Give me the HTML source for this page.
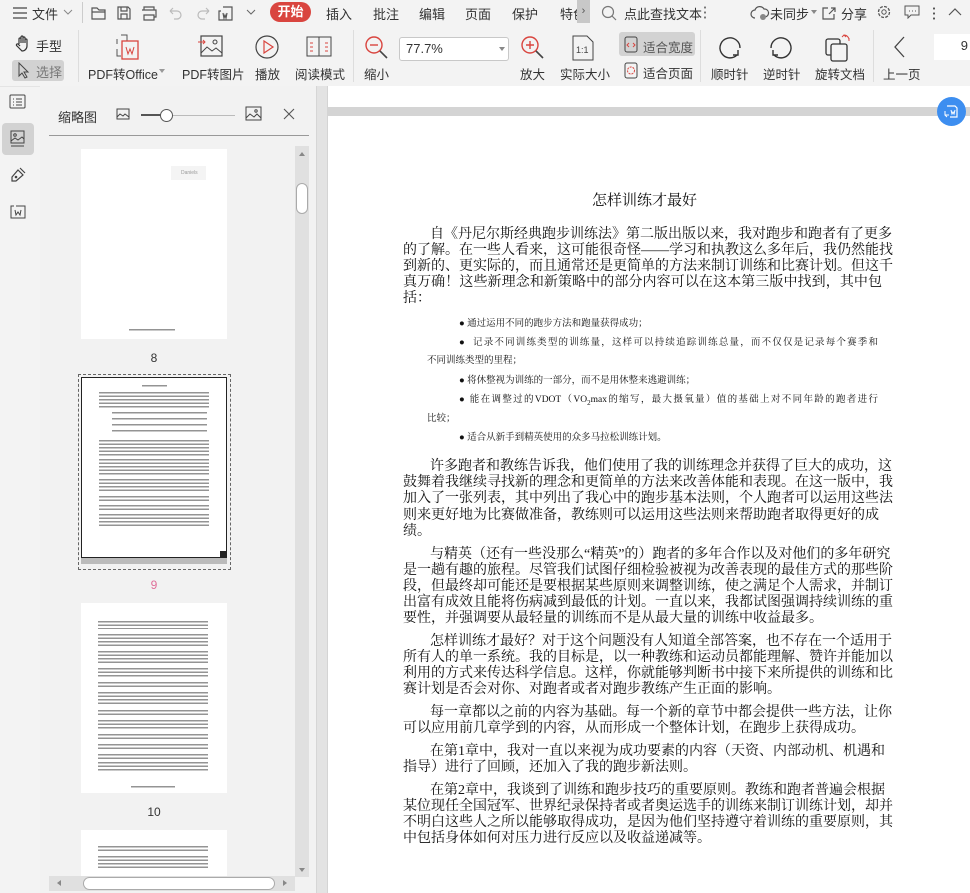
<!DOCTYPE html>
<html><head><meta charset="utf-8">
<style>
*{margin:0;padding:0;box-sizing:border-box}
body{width:970px;height:893px;overflow:hidden;background:#f3f3f3;font-family:"Liberation Sans","Noto Sans CJK SC",sans-serif;color:#333;position:relative;font-size:12px}
.a{position:absolute}
.tb{white-space:nowrap}
.l{position:absolute;left:403px;width:479px;height:16px;line-height:16px;margin-top:2px;font-family:"Liberation Serif","Noto Serif CJK SC",serif;font-size:14px;color:#111;white-space:nowrap;text-align:justify;text-align-last:justify}
.l.e{text-align-last:left}
.l.i{left:430px;width:452px}
.b{position:absolute;margin-top:1px;font-family:"Liberation Serif","Noto Serif CJK SC",serif;font-size:9.5px;color:#111;white-space:nowrap;height:14px;line-height:14px}
.thumb{position:absolute;left:81px;width:146px;height:190px;background:#fff}
.tx{position:absolute;background:repeating-linear-gradient(#666 0 1.5px,transparent 1.5px 3.5px);opacity:.7}
.lbl{position:absolute;left:81px;width:146px;text-align:center;font-size:12px;color:#333}
.ic{position:absolute}
</style></head><body>
<!-- top bar -->
<div class="a" style="left:0;top:0;width:970px;height:27px;background:#f3f3f3"></div>
<svg class="ic" style="left:12px;top:6px" width="16" height="14"><path d="M1 2h14M1 7h14M1 12h14" stroke="#444" stroke-width="1.2"/></svg>
<div class="a tb" style="left:32px;top:4px;font-size:13px">文件</div>
<svg class="ic" style="left:63px;top:9px" width="10" height="7"><path d="M1 1l4 4 4-4" stroke="#888" fill="none"/></svg>
<div class="a" style="left:82px;top:2px;width:1px;height:21px;background:#ccc"></div>
<svg class="ic" style="left:91px;top:5px" width="160" height="16" fill="none" stroke="#555" stroke-width="1.2">
<path d="M1 3h5l2 2h6v9H1z M1 7h13"/>
<path d="M27 2h10l2 2v10H27z M30 2v4h6V2 M30 14v-5h6v5"/>
<path d="M53 5V2h10v3 M51 5h14v7h-2 M53 10h10v5H53z"/>
<path d="M79 6h7a4 4 0 010 8h-3 M79 6l3-3 M79 6l3 3" stroke="#bbb"/>
<path d="M118 6h-7a4 4 0 000 8h3 M118 6l-3-3 M118 6l-3 3" stroke="#bbb"/>
<path d="M130 6h-2v9h13V2h-9 M132 8l1 5 1-3 1 3 1-5"/>
</svg>
<svg class="ic" style="left:246px;top:9px" width="10" height="7"><path d="M1 1l4 4 4-4" stroke="#666" fill="none"/></svg>
<div class="a" style="left:270px;top:2px;width:41px;height:20px;border-radius:10px;background:#d9453f;color:#fff;font-size:13px;text-align:center;line-height:20px;font-weight:bold">开始</div>
<div class="a tb" style="left:326px;top:4px;font-size:13px">插入</div>
<div class="a tb" style="left:373px;top:4px;font-size:13px">批注</div>
<div class="a tb" style="left:419px;top:4px;font-size:13px">编辑</div>
<div class="a tb" style="left:465px;top:4px;font-size:13px">页面</div>
<div class="a tb" style="left:512px;top:4px;font-size:13px">保护</div>
<div class="a tb" style="left:560px;top:4px;font-size:13px;width:18px;overflow:hidden">特色</div>
<div class="a" style="left:577px;top:0;width:13px;height:23px;background:#c8c8c8;color:#555;font-size:11px;text-align:center;line-height:22px">›</div>
<svg class="ic" style="left:601px;top:5px" width="16" height="16"><circle cx="7" cy="7" r="5.5" stroke="#777" fill="none" stroke-width="1.2"/><path d="M11 11l4 4" stroke="#777" stroke-width="1.2"/></svg>
<div class="a tb" style="left:624px;top:4px;font-size:13px">点此查找文本</div>
<div class="a" style="left:704px;top:5px;width:2px;height:16px;background:radial-gradient(circle,#777 1px,transparent 1.2px) 0 0/2px 5px"></div>
<svg class="ic" style="left:750px;top:5px" width="20" height="16"><path d="M5 13a4 4 0 010-8 5 5 0 019-1 4 4 0 011 8" stroke="#555" fill="none" stroke-width="1.2"/><circle cx="13" cy="12" r="3" fill="#888"/></svg>
<div class="a tb" style="left:770px;top:4px;font-size:13px">未同步</div>
<svg class="ic" style="left:811px;top:10px" width="6" height="4"><path d="M0 0h6L3 4z" fill="#888"/></svg>
<svg class="ic" style="left:821px;top:5px" width="16" height="16"><path d="M7 3H2v11h11V9 M8 9l6-6 M10 3h4v4" stroke="#555" fill="none" stroke-width="1.2"/></svg>
<div class="a tb" style="left:841px;top:4px;font-size:13px">分享</div>
<svg class="ic" style="left:876px;top:4px" width="16" height="16"><circle cx="8" cy="8" r="5.5" stroke="#555" fill="none" stroke-width="1.3" stroke-dasharray="3 1.3"/><circle cx="8" cy="8" r="2.2" stroke="#555" fill="none"/></svg>
<svg class="ic" style="left:904px;top:5px" width="16" height="14"><path d="M1 1h14v9H7l-3 3v-3H1z" stroke="#555" fill="none"/><path d="M5 6h1M8 6h1M11 6h1" stroke="#555"/></svg>
<div class="a" style="left:933px;top:6px;width:2px;height:14px;background:radial-gradient(circle,#555 1px,transparent 1.2px) 0 0/2px 5px"></div>
<svg class="ic" style="left:948px;top:8px" width="14" height="8"><path d="M1 7l6-6 6 6" stroke="#555" fill="none" stroke-width="1.2"/></svg>

<!-- toolbar -->
<svg class="ic" style="left:15px;top:35px" width="18" height="17"><path d="M4 9V4a1 1 0 012 0v4V2a1 1 0 012 0v6V3a1 1 0 012 0v5V5a1 1 0 012 0v6a5 5 0 01-5 5H7L2 11a1 1 0 011-2l2 2" stroke="#333" fill="none" stroke-width="1.2"/></svg>
<div class="a tb" style="left:36px;top:36px;font-size:13px">手型</div>
<div class="a" style="left:12px;top:60px;width:52px;height:21px;background:#d2d2d2;border-radius:3px"></div>
<svg class="ic" style="left:17px;top:62px" width="14" height="17"><path d="M2 1v13l3-3 3 5 2-1-3-5h4z" stroke="#444" fill="none"/></svg>
<div class="a tb" style="left:36px;top:62px;font-size:13px;color:#777">选择</div>
<div class="a" style="left:78px;top:30px;width:1px;height:52px;background:#ddd"></div>
<svg class="ic" style="left:113px;top:33px" width="28" height="28"><path d="M8 2h6v6M4 6v5M4 16v7h4" stroke="#555" fill="none"/><rect x="9" y="8" width="16" height="18" fill="none" stroke="#d9453f" stroke-width="1.3"/><path d="M13 14l2 7 2-5 2 5 2-7" stroke="#d9453f" fill="none"/></svg>
<div class="a tb" style="left:88px;top:64px;font-size:12.5px">PDF转Office</div>
<svg class="ic" style="left:159px;top:69px" width="6" height="4"><path d="M0 0h6L3 4z" fill="#999"/></svg>
<svg class="ic" style="left:198px;top:34px" width="26" height="24"><rect x="3" y="2" width="21" height="20" stroke="#444" fill="none" stroke-width="1.2"/><path d="M3 19l6-6 5 4 4-3 6 5" stroke="#444" fill="none"/><circle cx="17" cy="8" r="2" stroke="#444" fill="none"/><path d="M0 8h7M5 6l2 2-2 2" stroke="#d9453f" fill="none"/></svg>
<div class="a tb" style="left:182px;top:64px;font-size:12.5px">PDF转图片</div>
<svg class="ic" style="left:254px;top:34px" width="26" height="26"><circle cx="13" cy="13" r="11" stroke="#444" fill="none" stroke-width="1.2"/><path d="M10 7v12l9-6z" stroke="#d9453f" fill="none" stroke-width="1.2"/></svg>
<div class="a tb" style="left:255px;top:64px;font-size:12.5px">播放</div>
<svg class="ic" style="left:306px;top:36px" width="26" height="22"><rect x="1" y="1" width="24" height="19" stroke="#444" fill="none"/><path d="M13 1v19" stroke="#444"/><path d="M4 7h3M4 11h3M4 15h3M19 7h3M19 11h3M19 15h3" stroke="#d9453f"/></svg>
<div class="a tb" style="left:295px;top:64px;font-size:12.5px">阅读模式</div>
<div class="a" style="left:353px;top:30px;width:1px;height:52px;background:#ddd"></div>
<svg class="ic" style="left:364px;top:35px" width="26" height="26"><circle cx="10" cy="10" r="8" stroke="#d9453f" fill="none" stroke-width="1.4"/><path d="M6 10h8" stroke="#d9453f" stroke-width="1.4"/><path d="M16 16l7 7" stroke="#444" stroke-width="1.6"/></svg>
<div class="a tb" style="left:364px;top:64px;font-size:12.5px">缩小</div>
<div class="a" style="left:399px;top:37px;width:110px;height:24px;border:1px solid #c8c8c8;border-radius:3px;background:#fff;font-size:13px;padding:3px 0 0 6px">77.7%</div>
<svg class="ic" style="left:499px;top:47px" width="6" height="4"><path d="M0 0h6L3 4z" fill="#888"/></svg>
<svg class="ic" style="left:520px;top:35px" width="26" height="26"><circle cx="10" cy="10" r="8" stroke="#d9453f" fill="none" stroke-width="1.4"/><path d="M6 10h8M10 6v8" stroke="#d9453f" stroke-width="1.4"/><path d="M16 16l7 7" stroke="#444" stroke-width="1.6"/></svg>
<div class="a tb" style="left:520px;top:64px;font-size:12.5px">放大</div>
<svg class="ic" style="left:572px;top:35px" width="22" height="26"><path d="M1 1h14l6 6v18H1z" stroke="#444" fill="none"/><text x="4" y="18" font-size="9" fill="#444" font-family="Liberation Sans">1:1</text></svg>
<div class="a tb" style="left:560px;top:64px;font-size:12.5px">实际大小</div>
<div class="a" style="left:619px;top:32px;width:76px;height:24px;background:#d2d2d2;border-radius:3px"></div>
<svg class="ic" style="left:624px;top:36px" width="14" height="17"><rect x="1" y="1" width="12" height="15" rx="2" stroke="#444" fill="none"/><path d="M5 7l-2 2 2 2M9 7l2 2-2 2" stroke="#d9453f" fill="none"/></svg>
<div class="a tb" style="left:643px;top:37px;font-size:12.5px;color:#555">适合宽度</div>
<svg class="ic" style="left:624px;top:62px" width="14" height="17"><rect x="1" y="1" width="12" height="15" rx="2" stroke="#444" fill="none"/><circle cx="7" cy="8.5" r="3.5" stroke="#d9453f" fill="none" stroke-dasharray="2 1"/></svg>
<div class="a tb" style="left:643px;top:63px;font-size:12.5px">适合页面</div>
<div class="a" style="left:700px;top:30px;width:1px;height:52px;background:#ddd"></div>
<svg class="ic" style="left:717px;top:35px" width="26" height="26"><path d="M20 20A10 10 0 1123 13" stroke="#333" fill="none" stroke-width="1.4"/><path d="M16 20h5v-5" stroke="#333" fill="none" stroke-width="1.4"/></svg>
<div class="a tb" style="left:711px;top:64px;font-size:12.5px">顺时针</div>
<svg class="ic" style="left:768px;top:35px" width="26" height="26"><path d="M6 20A10 10 0 103 13" stroke="#333" fill="none" stroke-width="1.4"/><path d="M10 20H5v-5" stroke="#333" fill="none" stroke-width="1.4"/></svg>
<div class="a tb" style="left:763px;top:64px;font-size:12.5px">逆时针</div>
<svg class="ic" style="left:824px;top:33px" width="28" height="30"><rect x="2" y="6" width="14" height="16" rx="2" stroke="#333" fill="none" stroke-width="1.3"/><rect x="7" y="11" width="16" height="17" rx="2" fill="#f3f3f3" stroke="#333" stroke-width="1.3"/><path d="M20 2a5 5 0 015 5M18 4l2-2 2 2M25 5v3" stroke="#d9453f" fill="none"/></svg>
<div class="a tb" style="left:815px;top:64px;font-size:12.5px">旋转文档</div>
<div class="a" style="left:873px;top:30px;width:1px;height:52px;background:#ddd"></div>
<svg class="ic" style="left:893px;top:36px" width="14" height="22"><path d="M11 1L2 11l9 10" stroke="#444" fill="none" stroke-width="1.3"/></svg>
<div class="a tb" style="left:883px;top:64px;font-size:12.5px">上一页</div>
<div class="a" style="left:934px;top:34px;width:36px;height:26px;background:#fff;font-size:13px;text-align:right;padding:4px 2px 0 0">9</div>

<!-- left rail -->
<div class="a" style="left:0;top:86px;width:40px;height:807px;background:#f3f3f3;border-top:1px solid #e4e4e4"></div>
<svg class="ic" style="left:9px;top:94px" width="18" height="16"><rect x="1" y="1" width="15" height="13" rx="1" stroke="#444" fill="none"/><path d="M4 5h1M7 5h6M4 8h1M7 8h6M4 11h1M7 11h6" stroke="#444"/></svg>
<div class="a" style="left:2px;top:123px;width:32px;height:32px;background:#d2d2d2;border-radius:4px"></div>
<svg class="ic" style="left:9px;top:130px" width="18" height="18"><rect x="2" y="1" width="13" height="12" stroke="#444" fill="none"/><circle cx="6" cy="5" r="1.3" stroke="#444" fill="none"/><path d="M2 11l4-3 3 2 4-3 2 2M2 16h13" stroke="#444" fill="none"/></svg>
<svg class="ic" style="left:9px;top:166px" width="18" height="18"><path d="M3 11l6-7 5 5-7 6H3z M11 2l5 5" stroke="#444" fill="none" stroke-width="1.2"/><circle cx="7" cy="11" r="1.3" fill="#444"/></svg>
<svg class="ic" style="left:9px;top:202px" width="18" height="18"><path d="M5 4H2v12h14V4h-9" stroke="#444" fill="none"/><path d="M6 8l1 5 2-3 2 3 1-5" stroke="#444" fill="none"/></svg>

<!-- thumb panel -->
<div class="a" style="left:40px;top:86px;width:276px;height:807px;background:#f2f2f2"></div>
<div class="a tb" style="left:58px;top:107px;font-size:13px;color:#333">缩略图</div>
<svg class="ic" style="left:116px;top:108px" width="14" height="13"><rect x="1" y="1" width="12" height="10" stroke="#444" fill="none"/><path d="M1 9l3-3 3 2 2-2 4 3" stroke="#444" fill="none"/></svg>
<div class="a" style="left:141px;top:115px;width:94px;height:1px;background:#bbb"></div>
<div class="a" style="left:141px;top:114px;width:24px;height:2px;background:#555"></div>
<div class="a" style="left:160px;top:109px;width:13px;height:13px;border:1.3px solid #555;border-radius:50%;background:#fff"></div>
<svg class="ic" style="left:245px;top:106px" width="17" height="16"><rect x="1" y="1" width="15" height="13" stroke="#444" fill="none"/><path d="M1 12l4-4 4 3 3-3 4 4" stroke="#444" fill="none"/><circle cx="11" cy="5" r="1.2" stroke="#444" fill="none"/></svg>
<svg class="ic" style="left:283px;top:108px" width="12" height="12"><path d="M1 1l10 10M11 1L1 11" stroke="#555" stroke-width="1.1"/></svg>
<div class="a" style="left:49px;top:135px;width:260px;height:1px;background:#999"></div>

<!-- thumb 8 -->
<div class="thumb" style="top:149px"><div class="a" style="left:90px;top:17px;width:35px;height:14px;background:#f4f4f4;font-size:5px;color:#999;padding:4px 0 0 10px">Daniels</div><div class="tx" style="left:48px;top:180px;width:46px;height:2px"></div></div>
<div class="lbl" style="top:351px">8</div>
<!-- thumb 9 -->
<div class="a" style="left:78px;top:374px;width:153px;height:196px;border:1px dashed #666"></div>
<div class="a" style="left:81px;top:377px;width:146px;height:187px;background:#bbb"></div>
<div class="thumb" style="top:377px;height:181px;border:1px solid #222">
<div class="tx" style="left:60px;top:7px;width:25px;height:2px"></div>
<div class="tx" style="left:17px;top:14px;width:110px;height:16px"></div>
<div class="tx" style="left:30px;top:34px;width:95px;height:24px;background:repeating-linear-gradient(#666 0 1.5px,transparent 1.5px 6px)"></div>
<div class="tx" style="left:17px;top:62px;width:110px;height:16px"></div>
<div class="tx" style="left:17px;top:81px;width:110px;height:16px"></div>
<div class="tx" style="left:17px;top:101px;width:110px;height:14px"></div>
<div class="tx" style="left:17px;top:118px;width:110px;height:6px"></div>
<div class="tx" style="left:17px;top:127px;width:110px;height:6px"></div>
<div class="tx" style="left:17px;top:136px;width:110px;height:14px"></div>
<div class="a" style="left:138px;top:173px;width:7px;height:7px;background:#222"></div>
</div>
<div class="lbl" style="top:578px;color:#e0709a">9</div>
<!-- thumb 10 -->
<div class="thumb" style="top:603px">
<div class="tx" style="left:17px;top:18px;width:110px;height:8px"></div>
<div class="tx" style="left:17px;top:31px;width:110px;height:12px"></div>
<div class="tx" style="left:17px;top:48px;width:110px;height:12px"></div>
<div class="tx" style="left:17px;top:65px;width:110px;height:10px"></div>
<div class="tx" style="left:17px;top:79px;width:110px;height:6px"></div>
<div class="tx" style="left:17px;top:89px;width:110px;height:12px"></div>
<div class="tx" style="left:17px;top:107px;width:110px;height:6px"></div>
<div class="tx" style="left:17px;top:117px;width:110px;height:10px"></div>
<div class="tx" style="left:17px;top:131px;width:110px;height:6px"></div>
<div class="tx" style="left:17px;top:141px;width:110px;height:6px"></div>
<div class="tx" style="left:17px;top:151px;width:110px;height:6px"></div>
<div class="tx" style="left:17px;top:159px;width:110px;height:10px"></div>
<div class="tx" style="left:50px;top:183px;width:44px;height:2px"></div>
</div>
<div class="lbl" style="top:805px">10</div>
<div class="thumb" style="top:830px;height:46px">
<div class="tx" style="left:17px;top:16px;width:110px;height:6px"></div>
<div class="tx" style="left:17px;top:26px;width:110px;height:12px"></div>
</div>
<!-- scrollbars -->
<div class="a" style="left:295px;top:146px;width:14px;height:731px;background:#e0e0e0"></div>
<svg class="ic" style="left:299px;top:152px" width="6" height="4"><path d="M0 4h6L3 0z" fill="#888"/></svg>
<div class="a" style="left:296px;top:183px;width:12px;height:31px;border:1px solid #aaa;border-radius:6px;background:#fff"></div>
<svg class="ic" style="left:299px;top:868px" width="6" height="4"><path d="M0 0h6L3 4z" fill="#888"/></svg>
<div class="a" style="left:49px;top:876px;width:246px;height:15px;background:#e0e0e0"></div>
<div class="a" style="left:83px;top:877px;width:192px;height:13px;border:1px solid #aaa;border-radius:7px;background:#fff"></div>
<svg class="ic" style="left:57px;top:880px" width="4" height="6"><path d="M4 0v6L0 3z" fill="#888"/></svg>
<svg class="ic" style="left:283px;top:880px" width="4" height="6"><path d="M0 0v6l4-3z" fill="#888"/></svg>
<div class="a" style="left:316px;top:86px;width:11px;height:807px;background:#e3e3e3;border-left:1px solid #d6d6d6"></div>

<!-- document area -->
<div class="a" style="left:327px;top:86px;width:643px;height:807px;background:#d4d4d4"></div>
<div class="a" style="left:328px;top:86px;width:642px;height:21px;background:#fff"></div>
<div class="a" style="left:328px;top:116px;width:642px;height:777px;background:#fff"></div>
<div class="a" style="left:937px;top:97px;width:29px;height:29px;border-radius:50%;background:#3d8ef0"></div>
<svg class="ic" style="left:943px;top:103px" width="17" height="17"><path d="M4 3h8l2 2v9H7" stroke="#fff" fill="none" stroke-width="1.2"/><path d="M2 8v4h4M4 14l-2-2" stroke="#fff" fill="none"/><path d="M8 7l1 4 1-2 1 2 1-4" stroke="#fff" fill="none"/></svg>

<div class="a tb" style="left:592px;top:189px;font-size:15px;font-family:'Liberation Serif','Noto Serif CJK SC',serif;color:#111">怎样训练才最好</div>

<div class="l i" style="top:225px">自《丹尼尔斯经典跑步训练法》第二版出版以来，我对跑步和跑者有了更多</div>
<div class="l" style="top:241px">的了解。在一些人看来，这可能很奇怪——学习和执教这么多年后，我仍然能找</div>
<div class="l" style="top:257px">到新的、更实际的，而且通常还是更简单的方法来制订训练和比赛计划。但这千</div>
<div class="l" style="top:273px">真万确！这些新理念和新策略中的部分内容可以在这本第三版中找到，其中包</div>
<div class="l e" style="top:289px">括：</div>

<div class="b" style="left:459px;top:316px">● 通过运用不同的跑步方法和跑量获得成功；</div>
<div class="b" style="left:459px;top:335px;width:419px;text-align:justify;text-align-last:justify">●&nbsp;&nbsp;记录不同训练类型的训练量，这样可以持续追踪训练总量，而不仅仅是记录每个赛季和</div>
<div class="b" style="left:427px;top:353px">不同训练类型的里程；</div>
<div class="b" style="left:459px;top:373px">● 将休整视为训练的一部分，而不是用休整来逃避训练；</div>
<div class="b" style="left:459px;top:392px;width:419px;text-align:justify;text-align-last:justify">● 能在调整过的VDOT（VO<sub style="font-size:7px">2</sub>max的缩写，最大摄氧量）值的基础上对不同年龄的跑者进行</div>
<div class="b" style="left:427px;top:411px">比较；</div>
<div class="b" style="left:459px;top:430px">● 适合从新手到精英使用的众多马拉松训练计划。</div>

<div class="l i" style="top:457px">许多跑者和教练告诉我，他们使用了我的训练理念并获得了巨大的成功，这</div>
<div class="l" style="top:473px">鼓舞着我继续寻找新的理念和更简单的方法来改善体能和表现。在这一版中，我</div>
<div class="l" style="top:489px">加入了一张列表，其中列出了我心中的跑步基本法则，个人跑者可以运用这些法</div>
<div class="l" style="top:506px;width:466px">则来更好地为比赛做准备，教练则可以运用这些法则来帮助跑者取得更好的成</div>
<div class="l e" style="top:522px">绩。</div>

<div class="l i" style="top:545px">与精英（还有一些没那么“精英”的）跑者的多年合作以及对他们的多年研究</div>
<div class="l" style="top:561px">是一趟有趣的旅程。尽管我们试图仔细检验被视为改善表现的最佳方式的那些阶</div>
<div class="l" style="top:577px">段，但最终却可能还是要根据某些原则来调整训练，使之满足个人需求，并制订</div>
<div class="l" style="top:593px">出富有成效且能将伤病减到最低的计划。一直以来，我都试图强调持续训练的重</div>
<div class="l e" style="top:609px">要性，并强调要从最轻量的训练而不是从最大量的训练中收益最多。</div>

<div class="l i" style="top:632px">怎样训练才最好？对于这个问题没有人知道全部答案，也不存在一个适用于</div>
<div class="l" style="top:648px">所有人的单一系统。我的目标是，以一种教练和运动员都能理解、赞许并能加以</div>
<div class="l" style="top:664px">利用的方式来传达科学信息。这样，你就能够判断书中接下来所提供的训练和比</div>
<div class="l e" style="top:680px">赛计划是否会对你、对跑者或者对跑步教练产生正面的影响。</div>

<div class="l i" style="top:703px">每一章都以之前的内容为基础。每一个新的章节中都会提供一些方法，让你</div>
<div class="l e" style="top:719px">可以应用前几章学到的内容，从而形成一个整体计划，在跑步上获得成功。</div>

<div class="l i" style="top:742px;width:445px">在第1章中，我对一直以来视为成功要素的内容（天资、内部动机、机遇和</div>
<div class="l e" style="top:758px">指导）进行了回顾，还加入了我的跑步新法则。</div>

<div class="l i" style="top:781px;width:445px">在第2章中，我谈到了训练和跑步技巧的重要原则。教练和跑者普遍会根据</div>
<div class="l" style="top:797px">某位现任全国冠军、世界纪录保持者或者奥运选手的训练来制订训练计划，却并</div>
<div class="l" style="top:813px">不明白这些人之所以能够取得成功，是因为他们坚持遵守着训练的重要原则，其</div>
<div class="l e" style="top:829px">中包括身体如何对压力进行反应以及收益递减等。</div>
</body></html>
